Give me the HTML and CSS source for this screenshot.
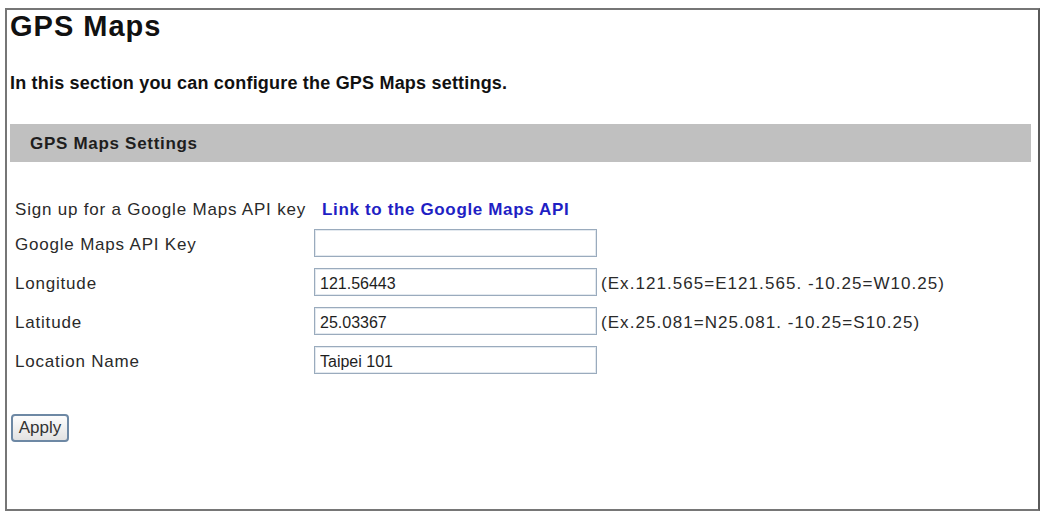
FILE: index.html
```html
<!DOCTYPE html>
<html lang="en">
<head>
    <meta charset="UTF-8">
    <meta name="viewport" content="width=device-width, initial-scale=1.0">
    <title>GPS Maps</title>
    <link rel="stylesheet" href="styles.css">
</head>
<body>
    <div class="marco">
        <h1>GPS Maps</h1>
        <p class="intro">In this section you can configure the GPS Maps settings.</p>

        <div class="barra">GPS Maps Settings</div>

        <form class="ajustes" onsubmit="return false">
            <span class="etiqueta">Sign up for a Google Maps API key</span>
            <a class="enlace" href="#">Link to the Google Maps API</a>
            <span></span>

            <label class="etiqueta campo" for="clave">Google Maps API Key</label>
            <input type="text" id="clave" name="clave">
            <span></span>

            <label class="etiqueta campo" for="longitud">Longitude</label>
            <input type="text" id="longitud" name="longitud" value="121.56443">
            <span class="ayuda">(Ex.121.565=E121.565. -10.25=W10.25)</span>

            <label class="etiqueta campo" for="latitud">Latitude</label>
            <input type="text" id="latitud" name="latitud" value="25.03367">
            <span class="ayuda">(Ex.25.081=N25.081. -10.25=S10.25)</span>

            <label class="etiqueta campo" for="lugar">Location Name</label>
            <input type="text" id="lugar" name="lugar" value="Taipei 101">
            <span></span>
        </form>

        <button type="button" class="aplicar">Apply</button>
    </div>
</body>
</html>
```

FILE: styles.css
```css
body {
    margin: 0;
    background: #ffffff;
    font-family: "Liberation Sans", Arial, sans-serif;
    color: #1e1e1e;
}

.marco {
    margin: 8px 0 0 5px;
    width: 1035px;
    height: 503px;
    box-sizing: border-box;
    border: 2px solid #767676;
    border-right-color: #5a5a5a;
    padding: 0 7px 0 3px;
}

h1 {
    margin: 2px 0 0;
    font-size: 29px;
    line-height: 28px;
    letter-spacing: 1px;
    font-weight: bold;
    color: #111111;
}

.intro {
    margin: 33px 0 0;
    font-size: 18px;
    line-height: 21px;
    font-weight: bold;
    letter-spacing: 0.2px;
    color: #111111;
}

/* Barra gris del titulo de la seccion */
.barra {
    margin-top: 30px;
    height: 38px;
    box-sizing: border-box;
    padding: 2px 0 0 20px;
    line-height: 36px;
    background: #c0c0c0;
    font-size: 17px;
    font-weight: bold;
    letter-spacing: 0.7px;
}

.ajustes {
    margin-top: 39px;
    padding-left: 5px;
    display: grid;
    grid-template-columns: 299px 283px auto;
    grid-template-rows: 17px repeat(4, 28px);
    row-gap: 11px;
    align-items: center;
    font-size: 17px;
    letter-spacing: 0.8px;
    color: #2a2a2a;
}

.etiqueta {
    line-height: 17px;
}

.campo {
    padding-top: 3px;
}

.enlace {
    padding-left: 8px;
    color: #1f1fc4;
    font-weight: bold;
    text-decoration: none;
    line-height: 17px;
    letter-spacing: 0.65px;
    white-space: nowrap;
}

input {
    width: 283px;
    height: 28px;
    box-sizing: border-box;
    margin: 0;
    padding: 3px 5px 0;
    border: 1px solid #9aabbd;
    box-shadow: inset 0 0 0 1px #e3e9ef;
    font-family: "Liberation Sans", Arial, sans-serif;
    font-size: 16px;
    color: #1e1e1e;
}

input:focus {
    outline: none;
}

.ayuda {
    padding: 3px 0 0 4px;
    letter-spacing: 1.05px;
    white-space: nowrap;
}

.aplicar {
    margin: 40px 0 0 1px;
    width: 58px;
    height: 28px;
    padding: 0;
    border: 2px solid #6d88a4;
    border-radius: 4px;
    background: linear-gradient(#fdfdfd, #e2e2e2);
    font-family: "Liberation Sans", Arial, sans-serif;
    font-size: 17px;
    color: #333333;
    cursor: pointer;
}
```
